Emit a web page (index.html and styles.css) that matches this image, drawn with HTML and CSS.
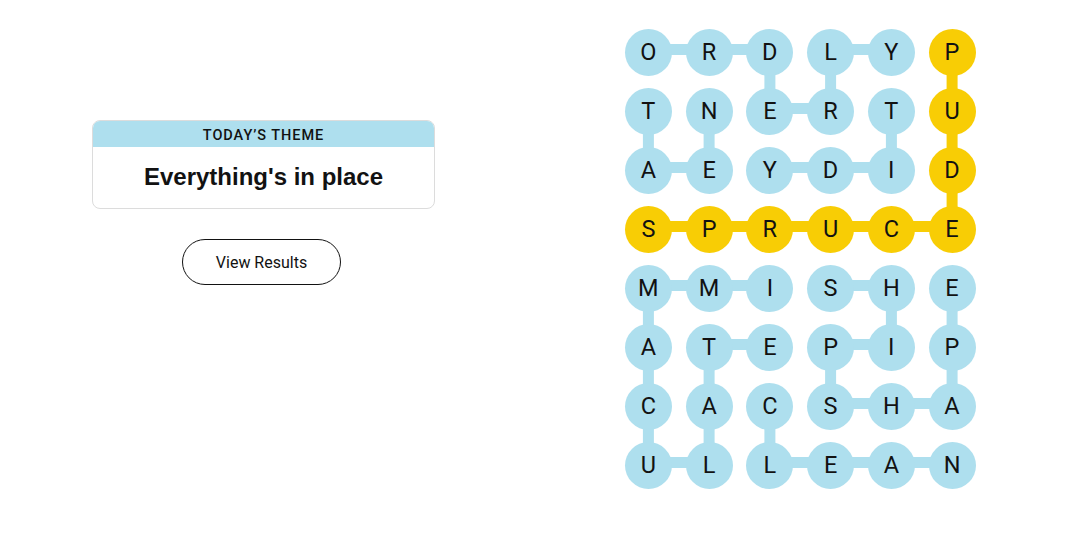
FILE: index.html
```html
<!DOCTYPE html>
<html lang="en">
<head>
<meta charset="utf-8">
<title>Strands</title>
<link rel="stylesheet" href="styles.css">
</head>
<body>
<main class="page">
  <section class="side">
    <div class="theme-card">
      <div class="theme-head">TODAY’S THEME</div>
      <div class="theme-body">Everything's in place</div>
    </div>
    <button class="results-btn" type="button">View Results</button>
  </section>

  <section class="board">
    <svg class="links" viewBox="0 0 364.4 472" width="364.4" height="472" aria-hidden="true">
      <g stroke="#aedfee" stroke-width="11" stroke-linecap="butt">
        <line x1="30.4" y1="26.5" x2="91.1" y2="26.5"/>
        <line x1="91.1" y1="26.5" x2="151.9" y2="26.5"/>
        <line x1="212.6" y1="26.5" x2="273.4" y2="26.5"/>
        <line x1="151.9" y1="85.5" x2="212.6" y2="85.5"/>
        <line x1="30.4" y1="144.5" x2="91.1" y2="144.5"/>
        <line x1="151.9" y1="144.5" x2="212.6" y2="144.5"/>
        <line x1="212.6" y1="144.5" x2="273.4" y2="144.5"/>
        <line x1="30.4" y1="262.5" x2="91.1" y2="262.5"/>
        <line x1="91.1" y1="262.5" x2="151.9" y2="262.5"/>
        <line x1="212.6" y1="262.5" x2="273.4" y2="262.5"/>
        <line x1="91.1" y1="321.5" x2="151.9" y2="321.5"/>
        <line x1="212.6" y1="321.5" x2="273.4" y2="321.5"/>
        <line x1="212.6" y1="380.5" x2="273.4" y2="380.5"/>
        <line x1="273.4" y1="380.5" x2="334.1" y2="380.5"/>
        <line x1="30.4" y1="439.5" x2="91.1" y2="439.5"/>
        <line x1="151.9" y1="439.5" x2="212.6" y2="439.5"/>
        <line x1="212.6" y1="439.5" x2="273.4" y2="439.5"/>
        <line x1="273.4" y1="439.5" x2="334.1" y2="439.5"/>
        <line x1="151.9" y1="29.5" x2="151.9" y2="88.5"/>
        <line x1="212.6" y1="29.5" x2="212.6" y2="88.5"/>
        <line x1="30.4" y1="88.5" x2="30.4" y2="147.5"/>
        <line x1="91.1" y1="88.5" x2="91.1" y2="147.5"/>
        <line x1="273.4" y1="88.5" x2="273.4" y2="147.5"/>
        <line x1="30.4" y1="265.5" x2="30.4" y2="324.5"/>
        <line x1="273.4" y1="265.5" x2="273.4" y2="324.5"/>
        <line x1="334.1" y1="265.5" x2="334.1" y2="324.5"/>
        <line x1="30.4" y1="324.5" x2="30.4" y2="383.5"/>
        <line x1="91.1" y1="324.5" x2="91.1" y2="383.5"/>
        <line x1="212.6" y1="324.5" x2="212.6" y2="383.5"/>
        <line x1="334.1" y1="324.5" x2="334.1" y2="383.5"/>
        <line x1="30.4" y1="383.5" x2="30.4" y2="442.5"/>
        <line x1="91.1" y1="383.5" x2="91.1" y2="442.5"/>
        <line x1="151.9" y1="383.5" x2="151.9" y2="442.5"/>
      </g>
      <g stroke="#f8cd05" stroke-width="11" stroke-linecap="butt">
        <line x1="334.1" y1="29.5" x2="334.1" y2="88.5"/>
        <line x1="334.1" y1="88.5" x2="334.1" y2="147.5"/>
        <line x1="334.1" y1="147.5" x2="334.1" y2="206.5"/>
        <line x1="30.4" y1="203.5" x2="334.1" y2="203.5"/>
      </g>
    </svg>
    <div class="grid">
      <span class="cell"><span class="dot">O</span></span>
      <span class="cell"><span class="dot">R</span></span>
      <span class="cell"><span class="dot">D</span></span>
      <span class="cell"><span class="dot">L</span></span>
      <span class="cell"><span class="dot">Y</span></span>
      <span class="cell"><span class="dot gold">P</span></span>

      <span class="cell"><span class="dot">T</span></span>
      <span class="cell"><span class="dot">N</span></span>
      <span class="cell"><span class="dot">E</span></span>
      <span class="cell"><span class="dot">R</span></span>
      <span class="cell"><span class="dot">T</span></span>
      <span class="cell"><span class="dot gold">U</span></span>

      <span class="cell"><span class="dot">A</span></span>
      <span class="cell"><span class="dot">E</span></span>
      <span class="cell"><span class="dot">Y</span></span>
      <span class="cell"><span class="dot">D</span></span>
      <span class="cell"><span class="dot">I</span></span>
      <span class="cell"><span class="dot gold">D</span></span>

      <span class="cell"><span class="dot gold">S</span></span>
      <span class="cell"><span class="dot gold">P</span></span>
      <span class="cell"><span class="dot gold">R</span></span>
      <span class="cell"><span class="dot gold">U</span></span>
      <span class="cell"><span class="dot gold">C</span></span>
      <span class="cell"><span class="dot gold">E</span></span>

      <span class="cell"><span class="dot">M</span></span>
      <span class="cell"><span class="dot">M</span></span>
      <span class="cell"><span class="dot">I</span></span>
      <span class="cell"><span class="dot">S</span></span>
      <span class="cell"><span class="dot">H</span></span>
      <span class="cell"><span class="dot">E</span></span>

      <span class="cell"><span class="dot">A</span></span>
      <span class="cell"><span class="dot">T</span></span>
      <span class="cell"><span class="dot">E</span></span>
      <span class="cell"><span class="dot">P</span></span>
      <span class="cell"><span class="dot">I</span></span>
      <span class="cell"><span class="dot">P</span></span>

      <span class="cell"><span class="dot">C</span></span>
      <span class="cell"><span class="dot">A</span></span>
      <span class="cell"><span class="dot">C</span></span>
      <span class="cell"><span class="dot">S</span></span>
      <span class="cell"><span class="dot">H</span></span>
      <span class="cell"><span class="dot">A</span></span>

      <span class="cell"><span class="dot">U</span></span>
      <span class="cell"><span class="dot">L</span></span>
      <span class="cell"><span class="dot">L</span></span>
      <span class="cell"><span class="dot">E</span></span>
      <span class="cell"><span class="dot">A</span></span>
      <span class="cell"><span class="dot">N</span></span>
    </div>
  </section>
</main>
</body>
</html>
```

FILE: styles.css
```css
* { box-sizing: border-box; }

html, body {
  margin: 0;
  padding: 0;
  background: #ffffff;
  color: #121212;
  font-family: "Liberation Sans", Arial, sans-serif;
}

.page {
  display: flex;
  align-items: flex-start;
  width: 1069px;
  height: 546px;
}

.side {
  width: 527px;
  padding-top: 120px;
  display: flex;
  flex-direction: column;
  align-items: center;
}

.theme-card {
  width: 343px;
  border: 1px solid #dcdcdc;
  border-radius: 8px;
  overflow: hidden;
  background: #fff;
}

.theme-head {
  background: #aedfee;
  height: 26px;
  display: flex;
  align-items: center;
  justify-content: center;
  font-family: "Roboto", "Liberation Sans", sans-serif;
  font-size: 14.5px;
  font-weight: 500;
  letter-spacing: 0.95px;
  color: #121212;
  padding-top: 2px;
}

.theme-body {
  height: 61px;
  display: flex;
  align-items: center;
  justify-content: center;
  font-family: "Liberation Sans", Arial, sans-serif;
  font-size: 24px;
  font-weight: 700;
  color: #121212;
  padding-bottom: 1px;
}

.results-btn {
  margin-top: 30px;
  margin-right: 4px;
  width: 159px;
  height: 46px;
  border: 1px solid #121212;
  border-radius: 23px;
  background: #fff;
  color: #121212;
  font-family: "Roboto", "Liberation Sans", sans-serif;
  font-size: 16px;
  font-weight: 400;
  padding: 0;
}

.board {
  position: relative;
  margin-left: 91px;
  margin-top: 23px;
  width: 364.4px;
  height: 472px;
}

.links {
  position: absolute;
  left: 0;
  top: 0;
  z-index: 0;
}

.grid {
  position: relative;
  z-index: 1;
  display: grid;
  grid-template-columns: repeat(6, 60.74px);
  grid-auto-rows: 59px;
}

.cell {
  display: flex;
  align-items: center;
  justify-content: center;
}

.dot {
  width: 47px;
  height: 47px;
  border-radius: 50%;
  background: #aedfee;
  display: flex;
  align-items: center;
  justify-content: center;
  font-family: "Roboto", "Liberation Sans", sans-serif;
  font-size: 23.5px;
  font-weight: 400;
  color: #121212;
  line-height: 1;
}

.dot.gold {
  background: #f8cd05;
}
```
